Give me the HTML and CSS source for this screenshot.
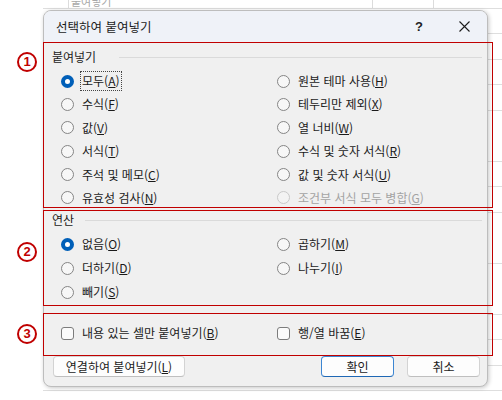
FILE: index.html
```html
<!DOCTYPE html>
<html lang="ko">
<head>
<meta charset="utf-8">
<link rel="stylesheet" href="styles.css">
</head>
<body>
<div class="sheet">
  <div class="sheet-top"><span class="sheet-text">붙여넣기</span></div>
  <div class="dialog">
    <div class="titlebar">
      <span class="title">선택하여 붙여넣기</span>
      <span class="help">?</span>
      <span class="close"><svg width="11" height="11" viewBox="0 0 11 11"><path d="M0.5 0.5L10.5 10.5M10.5 0.5L0.5 10.5" stroke="#1b1b1b" stroke-width="1.1" fill="none"/></svg></span>
    </div>

    <div class="group g-paste">
      <span class="mark m1">1</span>
      <div class="legend"><span>붙여넣기</span><i class="rule r1"></i></div>
      <div class="options paste-opts">
        <label class="opt"><span class="radio on"></span><span class="focus">모두(<u>A</u>)</span></label>
        <label class="opt"><span class="radio"></span><span>원본 테마 사용(<u>H</u>)</span></label>
        <label class="opt"><span class="radio"></span><span>수식(<u>F</u>)</span></label>
        <label class="opt"><span class="radio"></span><span>테두리만 제외(<u>X</u>)</span></label>
        <label class="opt"><span class="radio"></span><span>값(<u>V</u>)</span></label>
        <label class="opt"><span class="radio"></span><span>열 너비(<u>W</u>)</span></label>
        <label class="opt"><span class="radio"></span><span>서식(<u>T</u>)</span></label>
        <label class="opt"><span class="radio"></span><span>수식 및 숫자 서식(<u>R</u>)</span></label>
        <label class="opt"><span class="radio"></span><span>주석 및 메모(<u>C</u>)</span></label>
        <label class="opt"><span class="radio"></span><span>값 및 숫자 서식(<u>U</u>)</span></label>
        <label class="opt"><span class="radio"></span><span>유효성 검사(<u>N</u>)</span></label>
        <label class="opt disabled"><span class="radio"></span><span>조건부 서식 모두 병합(<u>G</u>)</span></label>
      </div>
    </div>

    <div class="group g-ops">
      <span class="mark m2">2</span>
      <div class="legend"><span>연산</span><i class="rule r2"></i></div>
      <div class="options ops-opts">
        <label class="opt"><span class="radio on"></span><span>없음(<u>O</u>)</span></label>
        <label class="opt"><span class="radio"></span><span>곱하기(<u>M</u>)</span></label>
        <label class="opt"><span class="radio"></span><span>더하기(<u>D</u>)</span></label>
        <label class="opt"><span class="radio"></span><span>나누기(<u>I</u>)</span></label>
        <label class="opt"><span class="radio"></span><span>빼기(<u>S</u>)</span></label>
      </div>
    </div>

    <div class="group g-check">
      <span class="mark m3">3</span>
      <div class="options check-opts">
        <label class="opt"><span class="check"></span><span>내용 있는 셀만 붙여넣기(<u>B</u>)</span></label>
        <label class="opt"><span class="check"></span><span>행/열 바꿈(<u>E</u>)</span></label>
      </div>
    </div>

    <div class="buttons">
      <span class="btn link">연결하여 붙여넣기(<u>L</u>)</span>
      <span class="spacer"></span>
      <span class="btn ok">확인</span>
      <span class="btn cancel">취소</span>
    </div>
  </div>
</div>
</body>
</html>
```
FILE: styles.css
```css
html, body {
  margin: 0;
  padding: 0;
  background: #ffffff;
}
body {
  width: 502px;
  height: 400px;
  overflow: hidden;
  font-family: "Noto Sans CJK KR", "Noto Sans", sans-serif;
  font-size: 12px;
  color: #1b1b1b;
}
.sheet {
  margin-left: 43px;
  height: 400px;
  background-image: repeating-linear-gradient(to bottom, transparent 0, transparent 8px, #dedede 8px, #dedede 9px, transparent 9px, transparent 25.5px);
}
.sheet-top {
  height: 10px;
  overflow: hidden;
  padding-left: 28px;
  background-image:
    linear-gradient(#dcdcdc, #dcdcdc),
    linear-gradient(#dcdcdc, #dcdcdc),
    linear-gradient(#dcdcdc, #dcdcdc);
  background-size: 1px 8px, 1px 8px, 1px 8px;
  background-position: 25px 0, 329px 0, 390px 0;
  background-repeat: no-repeat;
}
.sheet-text {
  display: block;
  margin-top: -6px;
  line-height: 14px;
  font-size: 11px;
  color: #a8a8a8;
}
.dialog {
  width: 445px;
  height: 377px;
  box-sizing: border-box;
  border: 1px solid #bdbdbd;
  border-radius: 8px;
  background: #f0f0f0;
  box-shadow: 1px 1px 4px rgba(0, 0, 0, 0.22);
  display: flex;
  flex-direction: column;
}
.titlebar {
  height: 31px;
  flex: none;
  display: flex;
  align-items: center;
  padding: 0 11px 0 12px;
  background: #eff2f8;
  border-radius: 7px 7px 0 0;
  font-size: 12.5px;
  line-height: 16px;
}
.title {
  flex: 1;
}
.help {
  width: 20px;
  text-align: center;
  font-family: "Liberation Sans", sans-serif;
  font-weight: bold;
  font-size: 13px;
  color: #222;
}
.close {
  width: 24px;
  margin-left: 23px;
  display: flex;
  justify-content: center;
}
.group {
  position: relative;
  flex: none;
  box-sizing: border-box;
  border: 1px solid #c00000;
  margin: 0 -6px 0 -1px;
  padding-left: 8px;
}
.g-paste {
  height: 166px;
  padding-top: 6px;
}
.g-ops {
  height: 96px;
  margin-top: 2px;
  padding-top: 1px;
}
.g-check {
  height: 43px;
  margin-top: 7px;
  padding-top: 11px;
}
.mark {
  position: absolute;
  left: -27px;
  width: 20px;
  height: 20px;
  box-sizing: border-box;
  border: 2px solid #c00000;
  border-radius: 50%;
  color: #c00000;
  font-family: "Liberation Sans", sans-serif;
  font-weight: bold;
  font-size: 13px;
  line-height: 16px;
  text-align: center;
}
.m1 { top: 9px; }
.m2 { top: 31px; }
.m3 { top: 10px; }
.legend {
  width: 430px;
  height: 16px;
  display: flex;
  align-items: center;
  line-height: 16px;
}
.rule {
  flex: 1;
  height: 1px;
  background: #dadada;
}
.r1 { margin-left: 23px; }
.r2 { margin-left: 11px; }
.options {
  display: grid;
  grid-template-columns: 216px 1fr;
  grid-auto-rows: 16px;
  padding-left: 9px;
}
.paste-opts {
  margin-top: 8px;
  row-gap: 7.4px;
}
.ops-opts {
  margin-top: 8px;
  row-gap: 8px;
}
.opt {
  display: flex;
  align-items: center;
  gap: 8px;
  line-height: 16px;
  white-space: nowrap;
}
.opt u {
  text-underline-offset: 1px;
}
.radio {
  flex: none;
  width: 13px;
  height: 13px;
  box-sizing: border-box;
  border: 1px solid #858585;
  border-radius: 50%;
  background: #f7f7f7;
}
.radio.on {
  border: 4px solid #005fb8;
  background: #ffffff;
}
.disabled {
  color: #a3a3a3;
}
.disabled .radio {
  border-color: #c9c9c9;
  background: #f3f3f3;
}
.focus {
  outline: 1px dotted #444;
  outline-offset: 1px;
}
.check {
  flex: none;
  width: 13px;
  height: 13px;
  box-sizing: border-box;
  border: 1px solid #7c7c7c;
  border-radius: 3px;
  background: #fbfbfb;
}
.buttons {
  height: 21px;
  flex: none;
  display: flex;
  padding: 0 7px 0 9px;
}
.spacer {
  flex: 1;
}
.btn {
  height: 21px;
  box-sizing: border-box;
  border: 1px solid #d3d3d3;
  border-bottom-color: #bfbfbf;
  border-radius: 4px;
  background: #fdfdfd;
  display: flex;
  align-items: center;
  justify-content: center;
  line-height: 16px;
}
.link {
  width: 132px;
}
.ok {
  width: 73px;
  margin-right: 13px;
  border-color: #3d86d2;
  border-bottom-color: #1f68b5;
}
.cancel {
  width: 73px;
}
```
